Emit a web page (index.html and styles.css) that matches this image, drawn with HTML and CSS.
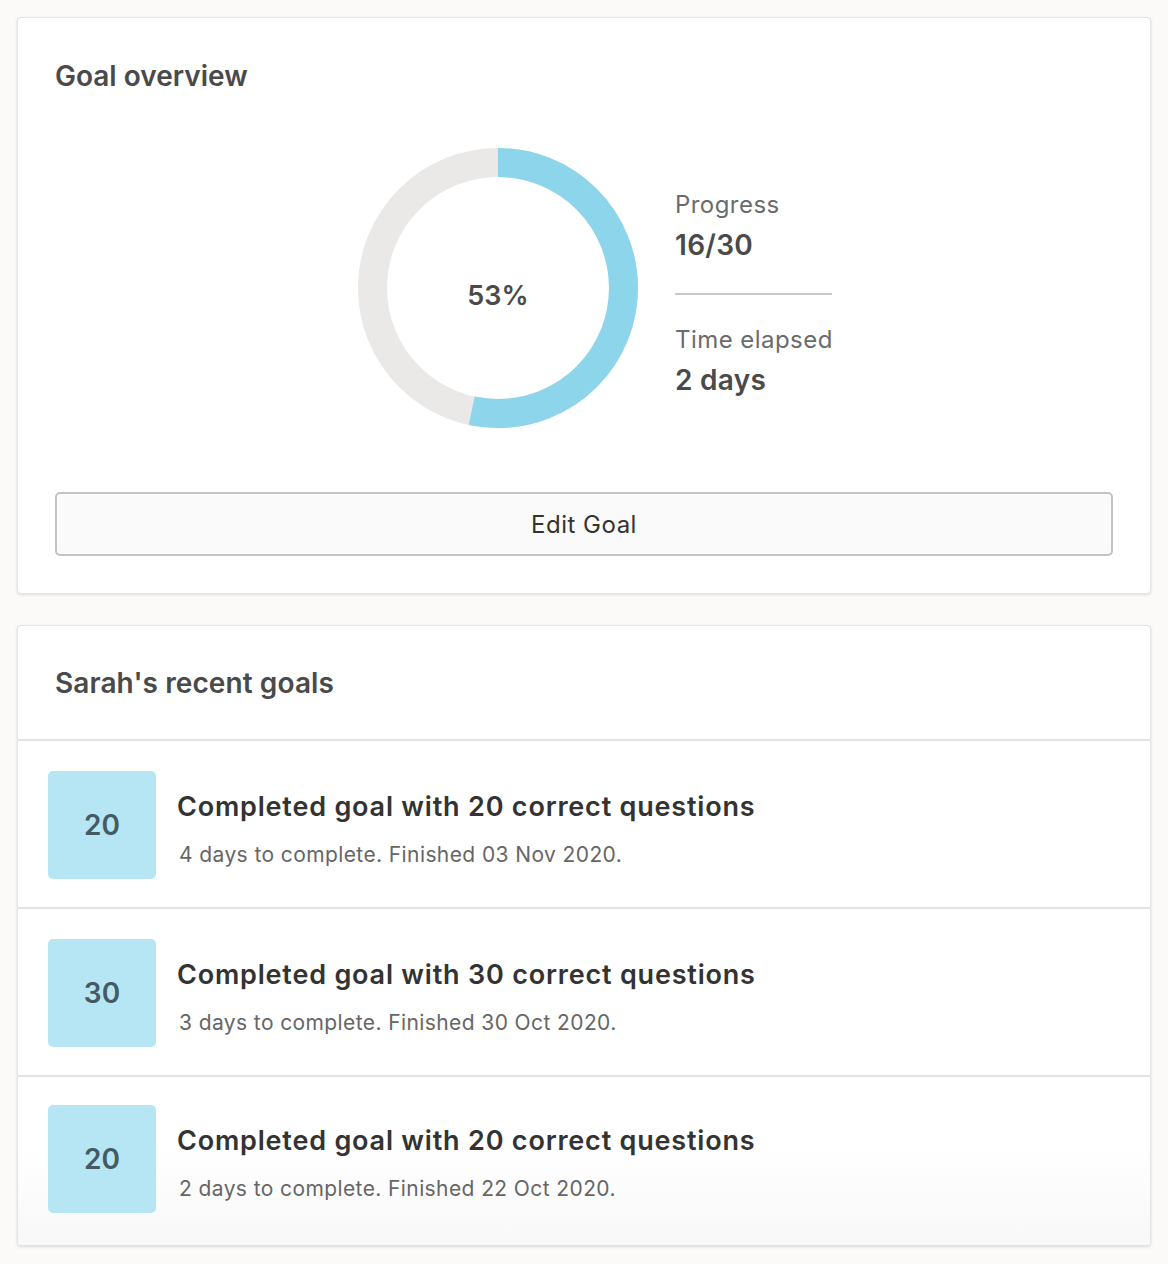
FILE: index.html
```html
<!DOCTYPE html>
<html lang="en">
<head>
<meta charset="utf-8">
<title>Goal overview</title>
<link rel="stylesheet" href="styles.css">
</head>
<body>
<main class="page">
  <section class="card overview">
    <h2 class="card-title">Goal overview</h2>
    <div class="summary">
      <div class="donut">
        <svg width="280" height="280" viewBox="0 0 280 280">
          <circle cx="140" cy="140" r="125.5" fill="none" stroke="#eae9e7" stroke-width="29"/>
          <circle cx="140" cy="140" r="125.5" fill="none" stroke="#8dd5ea" stroke-width="29" stroke-dasharray="420.6 788.5" transform="rotate(-90 140 140)"/>
        </svg>
        <span class="donut-label">53%</span>
      </div>
      <div class="stats">
        <div class="stat">
          <div class="stat-label">Progress</div>
          <div class="stat-value">16/30</div>
        </div>
        <div class="stat-divider"></div>
        <div class="stat">
          <div class="stat-label">Time elapsed</div>
          <div class="stat-value">2 days</div>
        </div>
      </div>
    </div>
    <button class="edit-btn" type="button">Edit Goal</button>
  </section>

  <section class="card recent">
    <h2 class="card-title recent-title">Sarah's recent goals</h2>
    <ul class="goal-list">
      <li class="goal">
        <div class="goal-badge">20</div>
        <div class="goal-text">
          <div class="goal-name">Completed goal with 20 correct questions</div>
          <div class="goal-meta">4 days to complete. Finished 03 Nov 2020.</div>
        </div>
      </li>
      <li class="goal">
        <div class="goal-badge">30</div>
        <div class="goal-text">
          <div class="goal-name">Completed goal with 30 correct questions</div>
          <div class="goal-meta">3 days to complete. Finished 30 Oct 2020.</div>
        </div>
      </li>
      <li class="goal">
        <div class="goal-badge">20</div>
        <div class="goal-text">
          <div class="goal-name">Completed goal with 20 correct questions</div>
          <div class="goal-meta">2 days to complete. Finished 22 Oct 2020.</div>
        </div>
      </li>
    </ul>
  </section>
</main>
</body>
</html>
```

FILE: styles.css
```css
* { box-sizing: border-box; }

html, body {
  margin: 0;
  padding: 0;
}

body {
  background: #fbfaf8;
  font-family: Inter, "Noto Sans", "Liberation Sans", sans-serif;
  color: #4a4a4a;
}

.page {
  padding: 17px;
  display: flex;
  flex-direction: column;
  gap: 31px;
}

.card {
  background: #fff;
  border: 1px solid #e4e3e1;
  border-radius: 4px;
  box-shadow: 0 1px 3px rgba(0, 0, 0, 0.12);
}

.card-title {
  margin: 0;
  font-size: 28px;
  line-height: 32px;
  font-weight: 600;
  color: #4a4a4a;
  letter-spacing: 0;
}

.overview {
  padding: 42px 37px 37px 37px;
}

.summary {
  display: flex;
  justify-content: center;
  align-items: center;
  gap: 37px;
  margin-top: 56px;
  padding-left: 22px;
}

.donut {
  position: relative;
  width: 280px;
  height: 280px;
}

.donut svg {
  display: block;
}

.donut-label {
  position: absolute;
  left: 0;
  right: 0;
  top: 50%;
  transform: translateY(-50%);
  margin-top: 7px;
  text-align: center;
  font-size: 27px;
  font-weight: 600;
  color: #4a4a4a;
}

.stats {
  display: flex;
  flex-direction: column;
  width: 157px;
  margin-top: 11px;
}

.stat-label {
  font-size: 24px;
  line-height: 30px;
  color: #6b6b6b;
  letter-spacing: 0.45px;
  white-space: nowrap;
}

.stat-value {
  margin-top: 8px;
  font-size: 28px;
  line-height: 34px;
  font-weight: 600;
  color: #4a4a4a;
  letter-spacing: 0.3px;
}

.stat-divider {
  height: 2px;
  background: #c8c8c8;
  margin: 31px 0 30px 0;
}

.edit-btn {
  display: block;
  width: 100%;
  height: 64px;
  margin-top: 64px;
  background: #fafafa;
  border: 2px solid #c3c3c3;
  border-radius: 5px;
  font-family: inherit;
  font-size: 24px;
  letter-spacing: 0.5px;
  color: #333;
}

.recent {
  overflow: hidden;
}

.recent-title {
  padding: 41px 37px 40px 37px;
  border-bottom: 2px solid #e2e2e2;
  letter-spacing: 0.1px;
}

.goal-list {
  list-style: none;
  margin: 0;
  padding: 0;
}

.goal {
  display: flex;
  align-items: center;
  gap: 21px;
  padding: 30px 30px 28px 30px;
  border-bottom: 2px solid #e2e2e2;
}

.goal:last-child {
  border-bottom: none;
  padding-top: 28px;
  padding-bottom: 32px;
  background: linear-gradient(to bottom, #fff 40%, #f8f8f8 100%);
}

.goal-badge {
  flex: none;
  width: 108px;
  height: 108px;
  border-radius: 5px;
  background: #b6e5f3;
  display: flex;
  align-items: center;
  justify-content: center;
  font-size: 28px;
  font-weight: 600;
  color: #455a62;
}

.goal-text {
  display: flex;
  flex-direction: column;
  gap: 19px;
  padding-top: 8px;
}

.goal-name {
  font-size: 27px;
  line-height: 32px;
  font-weight: 600;
  color: #333;
  letter-spacing: 0.8px;
  white-space: nowrap;
}

.goal-meta {
  font-size: 21px;
  line-height: 26px;
  color: #666;
  padding-left: 2px;
  letter-spacing: 0.4px;
}
```
